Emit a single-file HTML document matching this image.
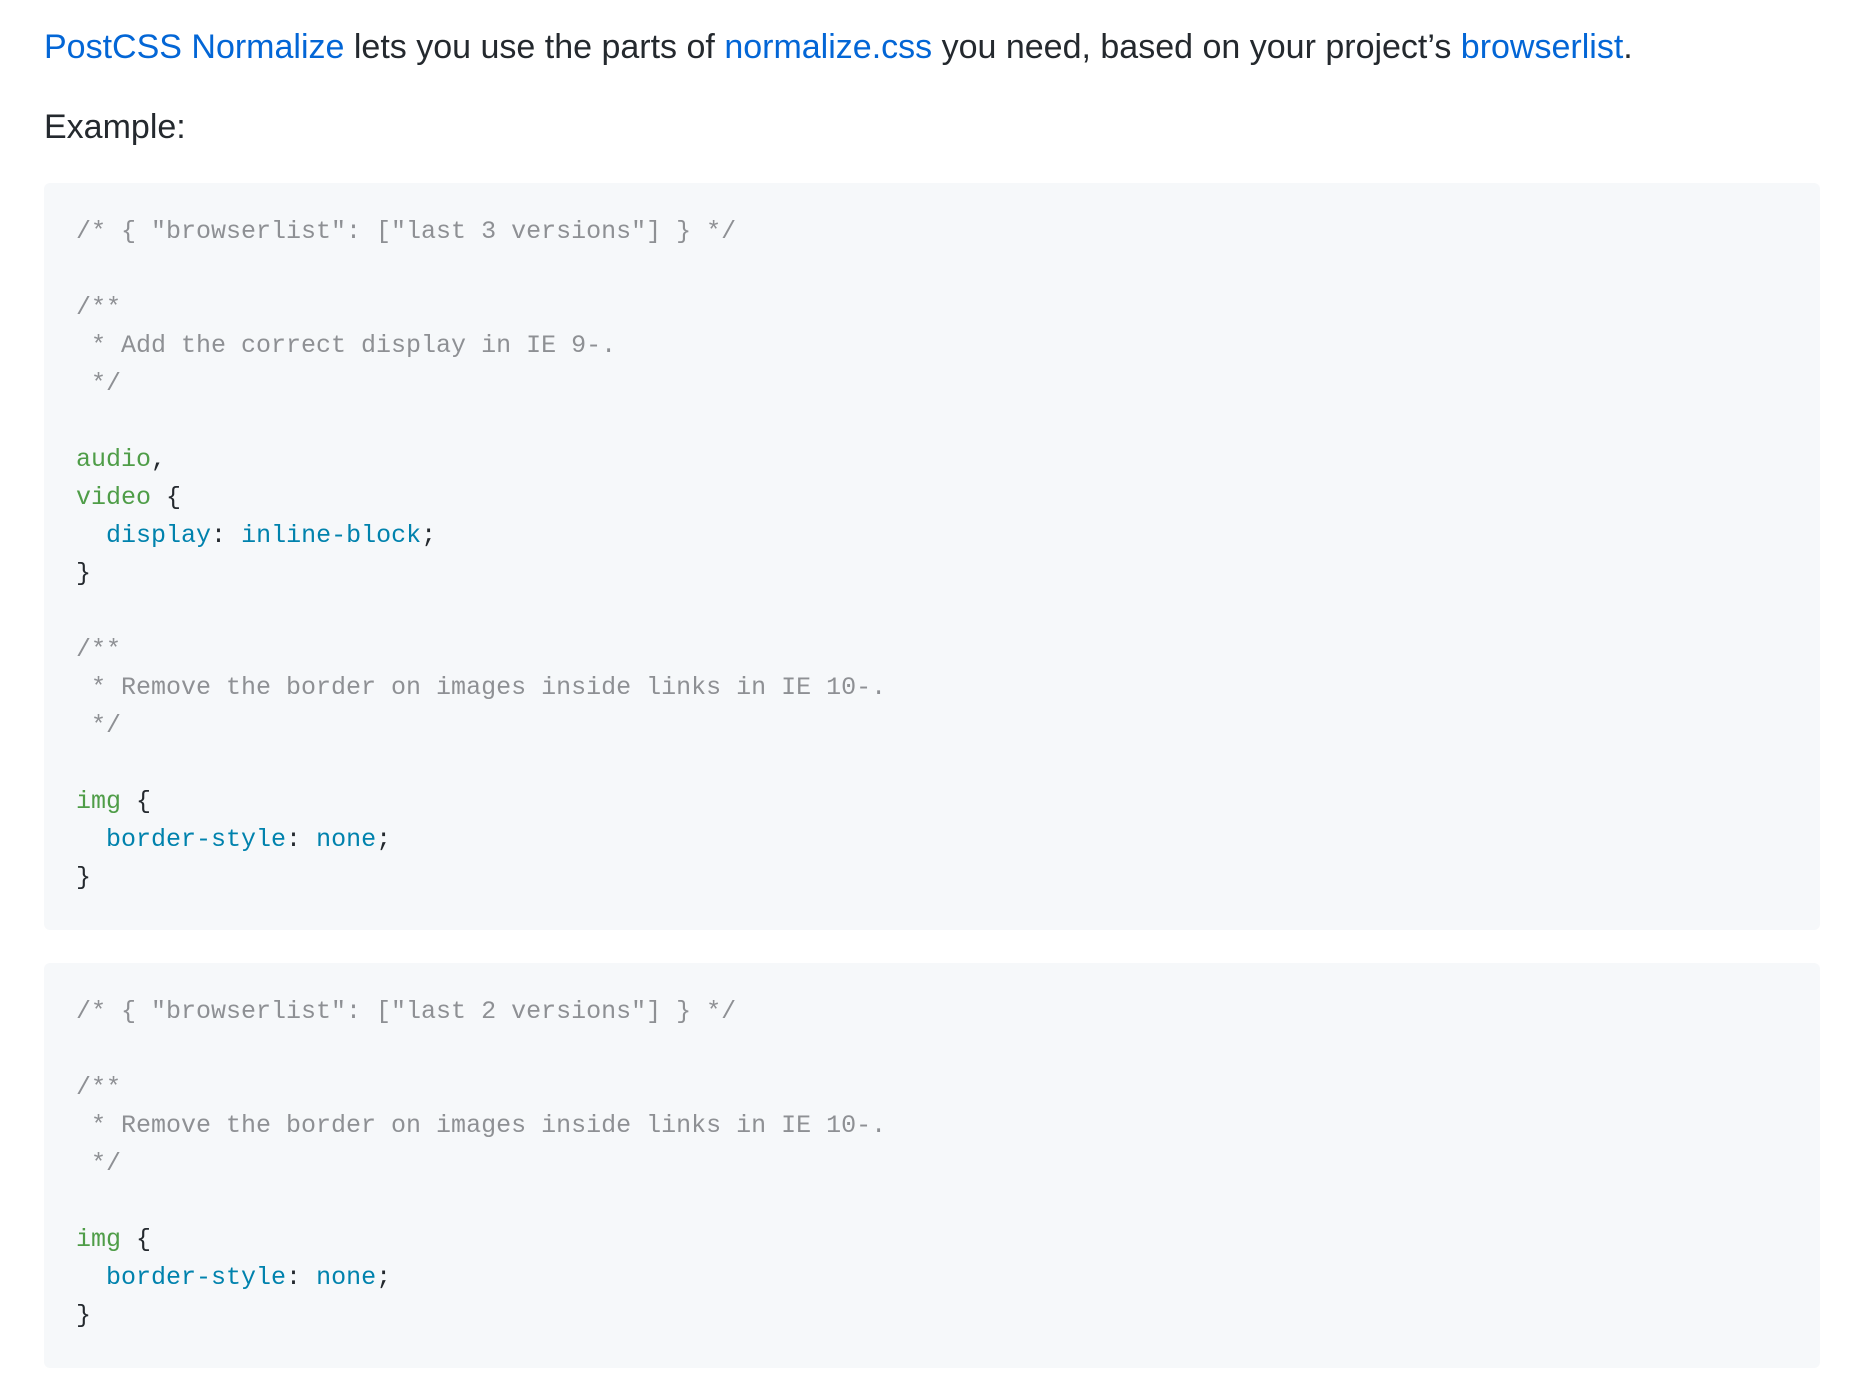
<!DOCTYPE html>
<html><head><meta charset="utf-8"><style>
html,body{margin:0;padding:0;background:#fff;}
body{width:1864px;height:1388px;overflow:hidden;font-family:"Liberation Sans",Arial,sans-serif;color:#24292e;}
p{position:absolute;left:44px;margin:0;font-size:34px;line-height:48px;white-space:nowrap;}
a{color:#0366d6;text-decoration:none;}
pre{position:absolute;left:44px;width:1784px;margin:0;background:#f6f8fa;border-radius:6px;box-sizing:border-box;padding:0 0 0 32px;font-family:"Liberation Mono","DejaVu Sans Mono",monospace;font-size:25px;line-height:38px;color:#24292e;}
.c{color:#8e9094}.g{color:#4f9d48}.b{color:#0082ad}
</style></head><body>
<p style="top:23px"><a>PostCSS Normalize</a> lets you use the parts of <a>normalize.css</a> you need, based on your project’s <a>browserlist</a>.</p>
<p style="top:103px">Example:</p>
<pre style="top:183px;width:1776px;height:747px;padding-top:30px"><span class="c">/* { "browserlist": ["last 3 versions"] } */</span>

<span class="c">/**
 * Add the correct display in IE 9-.
 */</span>

<span class="g">audio</span>,
<span class="g">video</span> {
  <span class="b">display</span>: <span class="b">inline-block</span>;
}

<span class="c">/**
 * Remove the border on images inside links in IE 10-.
 */</span>

<span class="g">img</span> {
  <span class="b">border-style</span>: <span class="b">none</span>;
}</pre>
<pre style="top:963px;width:1776px;height:405px;padding-top:30px"><span class="c">/* { "browserlist": ["last 2 versions"] } */</span>

<span class="c">/**
 * Remove the border on images inside links in IE 10-.
 */</span>

<span class="g">img</span> {
  <span class="b">border-style</span>: <span class="b">none</span>;
}</pre>
</body></html>
